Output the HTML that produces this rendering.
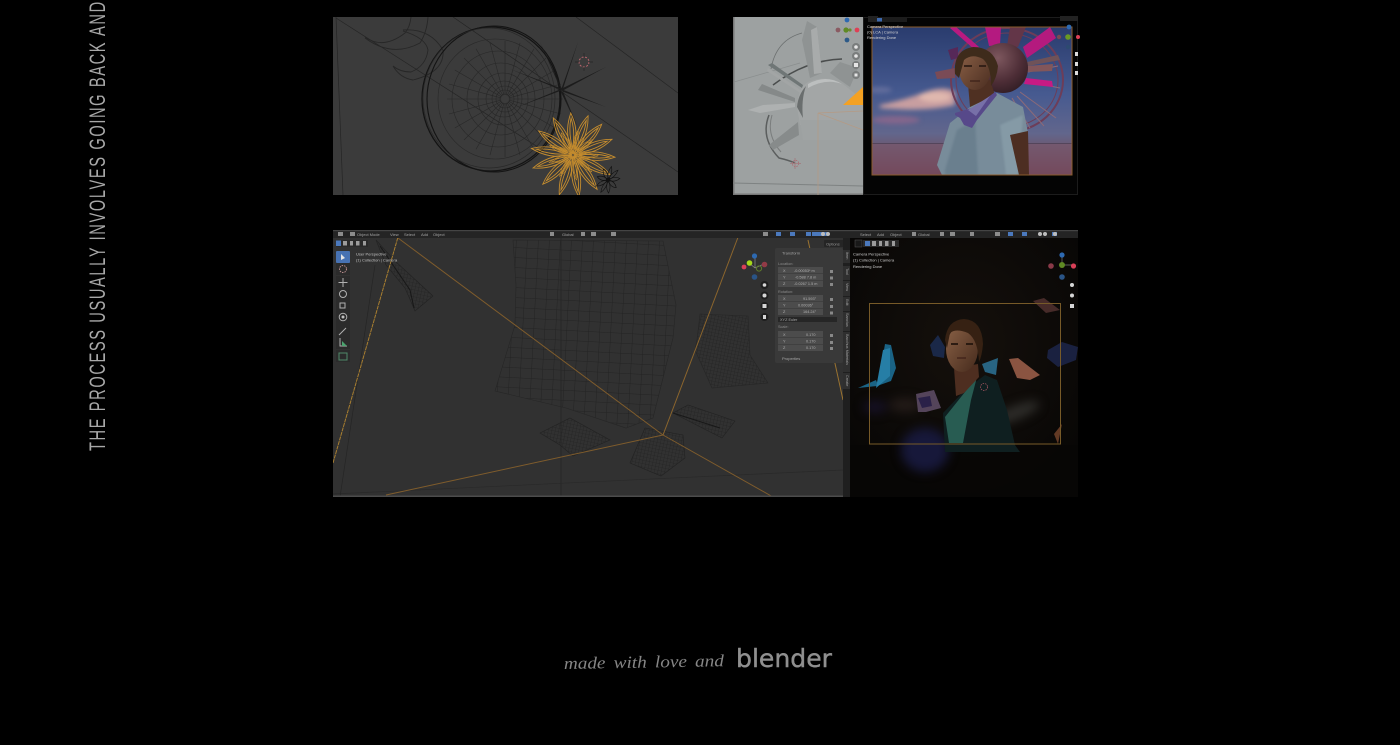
<!DOCTYPE html>
<html lang="en">
<head>
<meta charset="utf-8">
<title>Process</title>
<style>
html,body{margin:0;padding:0;background:#000;width:1400px;height:745px;overflow:hidden}
svg{display:block;position:absolute;left:0;top:0}
text{font-family:"Liberation Sans",sans-serif}
</style>
</head>
<body>
<svg width="1400" height="745" viewBox="0 0 1400 745" xmlns="http://www.w3.org/2000/svg">
<defs>
  <clipPath id="p1"><rect x="333" y="17" width="345" height="178"/></clipPath>
  <clipPath id="p2a"><rect x="733" y="17" width="130" height="178"/></clipPath>
  <clipPath id="p2b"><rect x="872" y="27" width="200" height="148"/></clipPath>
  <clipPath id="p3"><rect x="333" y="230" width="745" height="267"/></clipPath>
  <clipPath id="p3r"><rect x="850" y="238" width="228" height="259"/></clipPath>
  <pattern id="gridL" width="11" height="10" patternUnits="userSpaceOnUse" patternTransform="rotate(3)">
    <path d="M0 0H11M0 0V10" stroke="#202020" stroke-width=".8" fill="none"/>
  </pattern>
  <pattern id="gridS" width="3.4" height="3.4" patternUnits="userSpaceOnUse" patternTransform="rotate(12)">
    <path d="M0 0H3.4M0 0V3.4" stroke="#202020" stroke-width=".6" fill="none"/>
  </pattern>
  <linearGradient id="sky" x1="0" y1="0" x2="0" y2="1">
    <stop offset="0" stop-color="#2a3c6e"/>
    <stop offset=".45" stop-color="#465a90"/>
    <stop offset=".72" stop-color="#62668c"/>
    <stop offset=".8" stop-color="#6b5a74"/>
    <stop offset="1" stop-color="#6a3c50"/>
  </linearGradient>
  <radialGradient id="sph" cx=".4" cy=".3" r=".8">
    <stop offset="0" stop-color="#7d575e"/>
    <stop offset=".6" stop-color="#4d2d36"/>
    <stop offset="1" stop-color="#2c1a20"/>
  </radialGradient>
  <linearGradient id="face" x1="0" y1="0" x2="1" y2="1">
    <stop offset="0" stop-color="#8d6248"/>
    <stop offset="1" stop-color="#4a2d20"/>
  </linearGradient>
  <linearGradient id="faceW" x1="0" y1="0" x2="1" y2="1">
    <stop offset="0" stop-color="#8a6146"/>
    <stop offset="1" stop-color="#452a1c"/>
  </linearGradient>
  <radialGradient id="photoBg" cx=".5" cy=".4" r=".7">
    <stop offset="0" stop-color="#15100c"/>
    <stop offset="1" stop-color="#070605"/>
  </radialGradient>
  <filter id="soft" x="-2%" y="-2%" width="104%" height="104%" color-interpolation-filters="sRGB"><feGaussianBlur stdDeviation=".3"/></filter>
  <filter id="b1" color-interpolation-filters="sRGB"><feGaussianBlur stdDeviation="1"/></filter>
  <filter id="b2" color-interpolation-filters="sRGB"><feGaussianBlur stdDeviation="2.5"/></filter>
  <filter id="b4" x="-50%" y="-50%" width="200%" height="200%" color-interpolation-filters="sRGB"><feGaussianBlur stdDeviation="5"/></filter>
  <g id="petal"><path d="M0 -2C-6 -16 -5 -30 0 -42C5 -30 6 -16 0 -2ZM0 -6C-2.500 -18 -2.500 -28 0 -37C2.500 -28 2.500 -18 0 -6Z" fill="none" stroke="#c48c2e" stroke-width=".9"/></g>
  <g id="petalB"><path d="M0 0C-2.500 -5 -2.500 -9 0 -13C2.500 -9 2.500 -5 0 0Z" fill="none" stroke="#111" stroke-width=".7"/></g>
  <line id="spoke" x1="0" y1="-4" x2="0" y2="-58" stroke="#282828" stroke-width=".6"/>
</defs>

<rect width="1400" height="745" fill="#000"/>

<!-- Vertical headline -->
<text transform="translate(105,451) rotate(-90) scale(.65,1)" font-size="22.500" fill="#a8a8a8" textLength="691" lengthAdjust="spacing" style="font-family:'Liberation Sans Narrow','Liberation Sans',sans-serif">THE PROCESS USUALLY INVOLVES GOING BACK AND</text>

<!-- Panel 1: wireframe -->
<g filter="url(#soft)">
<g clip-path="url(#p1)">
  <rect x="333" y="17" width="345" height="178" fill="#3b3b3b"/>
  <g stroke="#252525" stroke-width=".7" fill="none">
    <path d="M576 17L678 93M453 17L678 172M336 17L343 195M336 18L566 165"/>
  </g>
  <g fill="none" stroke="#272727" stroke-width=".9">
    <path d="M365 37Q383 50 405 33Q410 27 411 17M365 38Q392 58 420 43Q427 32 428 17"/>
    <path d="M403 30Q430 28 443 50Q445 72 413 80Q400 78 393 66M403 31Q426 38 428 50Q426 66 411 72Q400 72 393 66"/>
  </g>
  <g fill="none" stroke="#282828" stroke-width=".6">
    <ellipse cx="505" cy="99" rx="5" ry="5"/>
    <ellipse cx="505" cy="99" rx="9" ry="9"/>
    <ellipse cx="505" cy="99" rx="13" ry="13"/>
    <ellipse cx="504" cy="99" rx="18" ry="18"/>
    <ellipse cx="503" cy="99" rx="25" ry="26"/>
    <ellipse cx="501" cy="99" rx="34" ry="36"/>
    <ellipse cx="498" cy="99" rx="46" ry="48"/>
    <ellipse cx="495" cy="99" rx="57" ry="60"/>
  </g>
  <g transform="translate(505,99)">
    <use href="#spoke" transform="rotate(0)"/><use href="#spoke" transform="rotate(15)"/><use href="#spoke" transform="rotate(30)"/><use href="#spoke" transform="rotate(45)"/><use href="#spoke" transform="rotate(60)"/><use href="#spoke" transform="rotate(75)"/><use href="#spoke" transform="rotate(90)"/><use href="#spoke" transform="rotate(105)"/><use href="#spoke" transform="rotate(120)"/><use href="#spoke" transform="rotate(135)"/><use href="#spoke" transform="rotate(150)"/><use href="#spoke" transform="rotate(165)"/><use href="#spoke" transform="rotate(180)"/><use href="#spoke" transform="rotate(195)"/><use href="#spoke" transform="rotate(210)"/><use href="#spoke" transform="rotate(225)"/><use href="#spoke" transform="rotate(240)"/><use href="#spoke" transform="rotate(255)"/><use href="#spoke" transform="rotate(270)"/><use href="#spoke" transform="rotate(285)"/><use href="#spoke" transform="rotate(300)"/><use href="#spoke" transform="rotate(315)"/><use href="#spoke" transform="rotate(330)"/><use href="#spoke" transform="rotate(345)"/>
  </g>
  <g fill="none" stroke="#141414">
    <ellipse cx="491" cy="99" rx="69" ry="72" stroke-width="1.300"/>
    <ellipse cx="494" cy="99" rx="67" ry="73" stroke-width="1.100"/>
    <ellipse cx="489" cy="98" rx="66" ry="70" stroke-width=".7" stroke="#282828"/>
  </g>
  <g fill="#1c1c1c">
    <path d="M561 90L578 42L562 92ZM561 89L606 67L562 91ZM561 89L606 107L561 91ZM561 90L510 69L560 88ZM561 89L515 108L560 91ZM561 90L540 42L562 89ZM560 90L578 128L562 89Z"/>
  </g>
  <g transform="translate(573,155)">
    <use href="#petal" transform="rotate(-3)"/><use href="#petal" transform="rotate(21)"/><use href="#petal" transform="rotate(43)"/><use href="#petal" transform="rotate(68)"/><use href="#petal" transform="rotate(93)"/><use href="#petal" transform="rotate(118)"/><use href="#petal" transform="rotate(145)"/><use href="#petal" transform="rotate(172)"/><use href="#petal" transform="rotate(199)"/><use href="#petal" transform="rotate(226)"/><use href="#petal" transform="rotate(252)"/><use href="#petal" transform="rotate(279)"/><use href="#petal" transform="rotate(305)"/><use href="#petal" transform="rotate(332)"/>
    <g transform="scale(.6) rotate(12)">
      <use href="#petal" transform="rotate(0)"/><use href="#petal" transform="rotate(40)"/><use href="#petal" transform="rotate(80)"/><use href="#petal" transform="rotate(120)"/><use href="#petal" transform="rotate(160)"/><use href="#petal" transform="rotate(200)"/><use href="#petal" transform="rotate(240)"/><use href="#petal" transform="rotate(280)"/><use href="#petal" transform="rotate(320)"/>
    </g>
  </g>
  <g transform="translate(608,180) rotate(30) scale(.85,1.100)">
    <use href="#petalB" transform="rotate(20)"/><use href="#petalB" transform="rotate(60)"/><use href="#petalB" transform="rotate(100)"/><use href="#petalB" transform="rotate(140)"/><use href="#petalB" transform="rotate(180)"/><use href="#petalB" transform="rotate(220)"/><use href="#petalB" transform="rotate(260)"/><use href="#petalB" transform="rotate(300)"/><use href="#petalB" transform="rotate(340)"/>
    <circle r="2.500" fill="#111"/>
  </g>
  <circle cx="584" cy="62" r="5" fill="none" stroke="#b9656d" stroke-width="1" stroke-dasharray="2 1.500"/>
  <path d="M584 53V57M584 67V71M575 62H579M589 62H593" stroke="#262626" stroke-width=".7"/>
</g>
</g>

<!-- Panel 2 -->
<g filter="url(#soft)">
<rect x="863" y="17" width="215" height="178" fill="#040404"/>
<rect x="863.500" y="17.500" width="214" height="177" fill="none" stroke="#1c1c1c"/>
<g clip-path="url(#p2a)">
  <rect x="733" y="17" width="130" height="178" fill="#9da1a1"/>
  <rect x="733" y="17" width="1.500" height="178" fill="#777"/>
  <rect x="733" y="193.500" width="130" height="1.500" fill="#777"/>
  <path d="M734 82L800 63" stroke="#8a8e8e" stroke-width=".7"/>
  <path d="M733 183L863 186" stroke="#7e8282" stroke-width="1"/>
  <path d="M771 69Q776 40 802 33" fill="none" stroke="#6c7070" stroke-width=".8"/>
  <path d="M773 85Q806 60 842 59" fill="none" stroke="#4a4d4d" stroke-width="1.500"/>
  <path d="M769 115Q760 138 779 158Q788 160 795 163" fill="none" stroke="#5b5e5e" stroke-width="1.500"/>
  <path d="M772 115Q766 135 781 152" fill="none" stroke="#7a7d7d" stroke-width="1"/>
  <path d="M807 21L817 27L822 73L810 78L802 40Z" fill="#8f9393"/>
  <path d="M811 30L817 27L822 73L814 74Z" fill="#a8abab"/>
  <path d="M768 65L772 63L803 85L802 88Z" fill="#6f7676"/>
  <path d="M768 68L802 91L800 93L767 71Z" fill="#a2a5a5"/>
  <path d="M758 90L762 84L795 98L795 102Z" fill="#858989"/>
  <path d="M748 110L763 105L795 103L795 107L760 113Z" fill="#aeb1b1"/>
  <path d="M769 145L798 122L799 135L773 150Z" fill="#878b8b"/>
  <path d="M830 73L840 62L858 68L850 87L837 78Z" fill="#8f9393"/>
  <path d="M797 107Q798 88 808 82Q826 74 843 84Q853 92 863 100V125H800Z" fill="#a3a6a6"/>
  <path d="M797 107Q798 95 806 86Q801 100 803 118Z" fill="#6a6e6e"/>
  <path d="M808 84Q826 74 842 84Q826 78 808 88Z" fill="#bcbfbf"/>
  <path d="M800 120H863V140H803Z" fill="#9fa3a3"/>
  <path d="M843 105L863 87V105Z" fill="#f4a122"/>
  <path d="M818 113L863 111M818 113L863 130M818 113V195" fill="none" stroke="#b59a84" stroke-width=".7"/>
  <path d="M795 158V169M790 163.500H801" stroke="#a2777b" stroke-width=".8"/>
  <circle cx="795.500" cy="163.500" r="3.200" fill="none" stroke="#ab6c72" stroke-width=".8" stroke-dasharray="1.500 1"/>
  <circle cx="847" cy="20" r="2.400" fill="#2d69b1"/>
  <circle cx="847" cy="40" r="2.400" fill="#2d5a88"/>
  <circle cx="838" cy="30" r="2.400" fill="#8a5b62"/>
  <circle cx="857" cy="30" r="2.400" fill="#de4055"/>
  <circle cx="846" cy="30" r="2.600" fill="#5f8a24"/>
  <circle cx="850" cy="30" r="1.600" fill="#6d8a2e"/>
  <g fill="#7a7d7d"><circle cx="856" cy="47" r="4"/><circle cx="856" cy="56" r="4"/><circle cx="856" cy="65" r="4"/><circle cx="856" cy="75" r="4"/></g>
  <g fill="#e6e6e6"><circle cx="856" cy="47" r="1.800"/><circle cx="856" cy="56" r="1.800"/><rect x="854" y="63" width="4" height="4"/><rect x="854.500" y="73.500" width="3" height="3"/></g>
</g>
<rect x="868" y="16" width="10" height="6" fill="#222"/>
<rect x="877" y="17" width="30" height="5" fill="#1c1c1c"/>
<rect x="877" y="18" width="5" height="3.500" fill="#3e69ad"/>
<rect x="1060" y="16" width="18" height="5" fill="#222"/>
<g clip-path="url(#p2b)">
  <rect x="872" y="27" width="200" height="148" fill="url(#sky)"/>
  <g filter="url(#b2)">
    <path d="M880 105Q905 100 925 92Q945 85 955 92L955 105Q925 112 880 108Z" fill="#c89ea0"/>
    <ellipse cx="935" cy="97" rx="16" ry="5" fill="#e0b8ae"/>
    <ellipse cx="896" cy="120" rx="24" ry="4" fill="#84668c"/>
    <ellipse cx="880" cy="90" rx="12" ry="3" fill="#646e9c"/>
  </g>
  <rect x="872" y="143" width="200" height="32" fill="#7d5568" opacity=".5"/>
  <path d="M872 143.500H1072" stroke="#4a3f55" stroke-width=".7"/>
  <g fill="none" stroke="#6d3d58">
    <ellipse cx="1007" cy="80" rx="56" ry="52" stroke-width="2"/>
    <ellipse cx="1007" cy="80" rx="51" ry="47" stroke-width="1"/>
    <path d="M1020 92L1056 118M1017 96L1044 126M1012 98L1030 128M1030 82L1060 88M1028 72L1058 66" stroke="#8c6a78" stroke-width="1"/>
  </g>
  <path d="M950 28L955 26L979 47L975 50Z" fill="#b81a80"/>
  <path d="M985 27H1001L1000 45L989 46Z" fill="#b41a80"/>
  <path d="M1023 47L1050 27L1056 38L1027 58Z" fill="#b41a7e"/>
  <path d="M1010 27L1026 27L1018 47L1007 46Z" fill="#633648"/>
  <path d="M1026 78L1052 81L1053 87L1024 84Z" fill="#c61a84"/>
  <path d="M1027 62L1058 55L1060 60L1028 66Z" fill="#6f5258"/>
  <path d="M1027 66L1053 64L1052 71L1027 72Z" fill="#82565a"/>
  <path d="M935 72L955 68L955 78L937 79Z" fill="#7a4b56"/>
  <path d="M948 50L958 47L958 58L951 60Z" fill="#562858"/>
  <circle cx="1003" cy="68" r="25" fill="url(#sph)"/>
  <path d="M937 165L950 123L970 107L997 93L1023 107L1028 133L1010 135L1028 175H942Z" fill="#788c9a"/>
  <path d="M945 170L957 130L975 120L978 175H945Z" fill="#6a7f8e" filter="url(#b1)"/>
  <path d="M1000 125L1023 115L1018 175H1006Z" fill="#859aa6" filter="url(#b1)"/>
  <path d="M1010 135L1028 131L1029 175H1019Z" fill="#4d2e22"/>
  <path d="M968 84L990 80L995 95L970 107Z" fill="#4f3022"/>
  <path d="M955 113L975 107L995 92L997 95L977 120L972 128L964 125L960 118L955 115Z" fill="#57498a"/>
  <path d="M968 110L990 96L976 116Z" fill="#7770a8"/>
  <ellipse cx="975" cy="69" rx="16" ry="21" fill="url(#face)"/>
  <path d="M964 66H972M979 66H986" stroke="#2e1c14" stroke-width="1.800"/>
  <path d="M970 81H980" stroke="#3a1f18" stroke-width="1.200"/>
  <path d="M955 74Q953 50 973 47Q993 47 998 66Q997 78 991 86Q991 66 983 59Q972 53 964 60L959 78Z" fill="#3e2b1b"/>
</g>
<rect x="872" y="27" width="200" height="148" fill="none" stroke="#8a5c2c" stroke-width="1"/>
<g fill="#d4d4d4">
  <text x="867" y="28" font-size="4">Camera Perspective</text>
  <text x="867" y="33.500" font-size="4">(0) LCA | Camera</text>
  <text x="867" y="39" font-size="4">Rendering Done</text>
</g>
<circle cx="1069" cy="27" r="2.400" fill="#2d69b1"/>
<circle cx="1068" cy="37" r="2.800" fill="#6a9a22"/>
<circle cx="1059" cy="37" r="2.200" fill="#7a4a52"/>
<circle cx="1078" cy="37" r="2" fill="#de4055"/>
<circle cx="1068" cy="47" r="2.200" fill="#2d4a70"/>
<g fill="#dcdcdc"><rect x="1075" y="52" width="3" height="4"/><rect x="1075" y="62" width="3" height="4"/><rect x="1075" y="71" width="3" height="4"/></g>
</g>

<!-- Panel 3 -->
<g filter="url(#soft)">
<g clip-path="url(#p3)">
  <rect x="333" y="230" width="510" height="267" fill="#313131"/>
  <path d="M333 494L843 470" stroke="#292929" stroke-width=".7"/>
  <path d="M561 238V497M375 265L340 497" stroke="#252525" stroke-width=".7"/>
  <g stroke="#262626" stroke-width=".6">
    <path d="M513 240L663 241L676 305L673 338L653 418L626 428L566 408L495 391L515 325L516 285Z" fill="url(#gridL)"/>
    <path d="M697 340L700 314L748 316L750 355L768 383L712 388L695 350Z" fill="url(#gridS)"/>
  </g>
  <g stroke="#222" stroke-width=".6">
    <path d="M376 240L395 261L433 296L415 311L405 288L386 265Z" fill="url(#gridS)"/>
    <path d="M540 433L570 418L610 440L573 456L560 445Z" fill="url(#gridS)"/>
    <path d="M630 463L645 428L683 435L685 458L661 476Z" fill="url(#gridS)"/>
    <path d="M673 413L688 405L735 421L722 438Z" fill="url(#gridS)"/>
  </g>
  <path d="M380 246L410 290L414 308" fill="none" stroke="#181818" stroke-width="1"/>
  <path d="M673 413L720 428" fill="none" stroke="#181818" stroke-width="1"/>
  <g fill="none" stroke-width="1">
    <path d="M333 463L398 237" stroke="#a97f31" stroke-dasharray="4 .7"/>
    <path d="M398 238L663 435L773 497" stroke="#7f5c2c"/>
    <path d="M386 495L663 435" stroke="#7f5c2c"/>
    <path d="M663 435L740 232" stroke="#8b652d"/>
    <path d="M808 240L843 400" stroke="#9b7330"/>
  </g>
  <rect x="333" y="495.500" width="745" height="1.500" fill="#4c4c4c"/>

  <rect x="333" y="230" width="745" height="8" fill="#242424"/>
  <rect x="333" y="230" width="745" height="1.200" fill="#444"/>
  <g fill="#a4a4a4">
    <text x="357" y="236" font-size="4">Object Mode</text>
    <text x="390" y="236" font-size="4">View</text>
    <text x="404" y="236" font-size="4">Select</text>
    <text x="421" y="236" font-size="4">Add</text>
    <text x="433" y="236" font-size="4">Object</text>
    <text x="562" y="236" font-size="4">Global</text>
    <text x="860" y="236" font-size="4">Select</text>
    <text x="877" y="236" font-size="4">Add</text>
    <text x="890" y="236" font-size="4">Object</text>
    <text x="918" y="236" font-size="4">Global</text>
  </g>
  <g fill="#8c8c8c">
    <rect x="338" y="232" width="5" height="4"/><rect x="350" y="232" width="5" height="4"/>
    <rect x="550" y="232" width="4" height="4"/><rect x="581" y="232" width="4" height="4"/><rect x="591" y="232" width="5" height="4"/><rect x="611" y="232" width="5" height="4"/>
    <rect x="912" y="232" width="4" height="4"/><rect x="940" y="232" width="4" height="4"/><rect x="950" y="232" width="5" height="4"/><rect x="970" y="232" width="4" height="4"/>
    <rect x="763" y="232" width="5" height="4"/><rect x="995" y="232" width="5" height="4"/>
  </g>
  <g fill="#4b79bd">
    <rect x="776" y="232" width="5" height="4"/><rect x="790" y="232" width="5" height="4"/><rect x="806" y="232" width="5" height="4"/><rect x="812" y="232" width="16" height="4"/>
    <rect x="1008" y="232" width="5" height="4"/><rect x="1022" y="232" width="5" height="4"/><rect x="1052" y="232" width="5" height="4"/>
  </g>
  <g fill="#bdbdbd"><circle cx="823" cy="234" r="2"/><circle cx="828" cy="234" r="2"/><circle cx="1055" cy="234" r="2"/><circle cx="1045" cy="234" r="2"/><circle cx="1040" cy="234" r="2"/></g>
  <rect x="824" y="240" width="24" height="7" rx="1" fill="#252525"/>
  <text x="826" y="245.500" font-size="4" fill="#999">Options</text>
  <rect x="1052" y="240" width="26" height="7" rx="1" fill="#252525"/>
  <text x="1057" y="245.500" font-size="4" fill="#999">Options</text>

  <rect x="336" y="240" width="32" height="7" fill="#2a2a2a"/>
  <rect x="336" y="240.500" width="5" height="5.500" fill="#4b79bd"/>
  <g fill="#9c9c9c"><rect x="343" y="241" width="4" height="4.500"/><rect x="350" y="241" width="3" height="4.500"/><rect x="356" y="241" width="3.500" height="4.500"/><rect x="363" y="241" width="3" height="4.500"/></g>
  <rect x="336" y="251" width="14" height="12" rx="1" fill="#4772b3"/>
  <path d="M341 254L341 260L345 258Z" fill="#e4e4e4"/>
  <g fill="#2b2b2b">
    <rect x="336" y="263" width="14" height="12"/>
    <rect x="336" y="276" width="14" height="49"/>
    <rect x="336" y="325" width="14" height="24"/>
    <rect x="336" y="350" width="14" height="12"/>
  </g>
  <g fill="none" stroke="#b0b0b0" stroke-width="1">
    <circle cx="343" cy="269" r="3.500" stroke-dasharray="1.500 1" stroke="#bb8e8e"/>
    <path d="M343 278V287M338.500 282.500H347.500"/>
    <circle cx="343" cy="294" r="3.500"/>
    <rect x="340" y="303" width="5" height="5"/>
    <circle cx="343" cy="317" r="3.800"/>
    <path d="M339 335L346 328"/>
    <path d="M340 338V346H347"/>
  </g>
  <circle cx="343" cy="317" r="1.500" fill="#c0c0c0"/>
  <path d="M342 341L347 346H342Z" fill="#4ca36f"/>
  <path d="M339 353H347V360H339Z" fill="none" stroke="#4f8a6a"/>
  <text x="356" y="255.500" font-size="4" fill="#c4c4c4">User Perspective</text>
  <text x="356" y="261.500" font-size="4" fill="#c4c4c4">(1) Collection | Camera</text>

  <path d="M755 268V258M755 268L749 263M755 268L764 264" stroke="#8a8a8a" stroke-width=".7"/>
  <circle cx="754.500" cy="256" r="2.600" fill="#2d69b1"/>
  <circle cx="749.500" cy="263" r="2.800" fill="#a6d81a"/>
  <circle cx="764.500" cy="264.500" r="2.800" fill="#923a46"/>
  <circle cx="744" cy="267" r="2.400" fill="#d93f57"/>
  <circle cx="759" cy="268.500" r="2.600" fill="none" stroke="#5e7a2a"/>
  <circle cx="754.500" cy="277" r="2.800" fill="#2a5486"/>
  <g fill="#1f1f1f"><circle cx="764.500" cy="285" r="4"/><circle cx="764.500" cy="295.500" r="4"/><circle cx="764.500" cy="306" r="4"/><circle cx="764.500" cy="317" r="4"/></g>
  <g fill="#d6d6d6"><circle cx="764.500" cy="285" r="1.800"/><circle cx="764.500" cy="295.500" r="2"/><rect x="762.500" y="304" width="4" height="4"/><rect x="763" y="315" width="3" height="4"/></g>

  <rect x="775" y="248" width="68" height="115" rx="2" fill="#393939"/>
  <text x="782" y="254.500" font-size="4" fill="#a8a8a8">Transform</text>
  <text x="778" y="265" font-size="3.800" fill="#8c8c8c">Location:</text>
  <rect x="778" y="267" width="45" height="20" fill="#4c4c4c"/>
  <text x="778" y="293" font-size="3.800" fill="#8c8c8c">Rotation:</text>
  <rect x="778" y="295" width="45" height="20" fill="#4c4c4c"/>
  <rect x="778" y="317" width="59" height="5" fill="#262626"/>
  <text x="780" y="321" font-size="3.800" fill="#aaa">XYZ Euler</text>
  <text x="778" y="328" font-size="3.800" fill="#8c8c8c">Scale:</text>
  <rect x="778" y="331" width="45" height="20" fill="#4c4c4c"/>
  <path d="M778 273.700H823M778 280.300H823M778 301.700H823M778 308.300H823M778 337.700H823M778 344.300H823" stroke="#393939" stroke-width=".7"/>
  <g fill="#b0b0b0" font-size="3.800">
    <text x="783" y="272">X</text><text x="794" y="272">-0.00053* m</text>
    <text x="783" y="278.500">Y</text><text x="795" y="278.500">-0.588 7.8 m</text>
    <text x="783" y="285">Z</text><text x="794" y="285">-0.0267 1.5 m</text>
    <text x="783" y="300">X</text><text x="803" y="300">91.593°</text>
    <text x="783" y="306.500">Y</text><text x="798" y="306.500">0.00036°</text>
    <text x="783" y="313">Z</text><text x="803" y="313">164.24°</text>
    <text x="783" y="336">X</text><text x="806" y="336">0.170</text>
    <text x="783" y="342.500">Y</text><text x="806" y="342.500">0.170</text>
    <text x="783" y="349">Z</text><text x="806" y="349">0.170</text>
  </g>
  <g fill="#888"><rect x="830" y="270" width="3" height="3"/><rect x="830" y="276.500" width="3" height="3"/><rect x="830" y="283" width="3" height="3"/><rect x="830" y="298" width="3" height="3"/><rect x="830" y="305" width="3" height="3"/><rect x="830" y="311.500" width="3" height="3"/><rect x="830" y="334" width="3" height="3"/><rect x="830" y="341" width="3" height="3"/><rect x="830" y="347" width="3" height="3"/></g>
  <text x="782" y="360" font-size="4" fill="#a8a8a8">Properties</text>

  <rect x="843" y="238" width="7" height="259" fill="#1f1f1f"/>
  <g fill="#2f2f2f">
    <rect x="843" y="250" width="7" height="13"/><rect x="843" y="266" width="7" height="14"/><rect x="843" y="281" width="7" height="15"/><rect x="843" y="297" width="7" height="14"/><rect x="843" y="312" width="7" height="19"/><rect x="843" y="332" width="7" height="40"/><rect x="843" y="373" width="7" height="16"/>
  </g>
  <g fill="#a0a0a0" font-size="3.800">
    <text transform="translate(846,252) rotate(90)">Item</text>
    <text transform="translate(846,268) rotate(90)">Tool</text>
    <text transform="translate(846,283) rotate(90)">View</text>
    <text transform="translate(846,299) rotate(90)">Edit</text>
    <text transform="translate(846,313) rotate(90)">Sanctus</text>
    <text transform="translate(846,334) rotate(90)">Bacchus Materials</text>
    <text transform="translate(846,375) rotate(90)">Create</text>
  </g>

  <g clip-path="url(#p3r)">
    <rect x="850" y="238" width="228" height="259" fill="url(#photoBg)"/>
    <rect x="850" y="445" width="228" height="52" fill="#070605" opacity=".8"/>
    <g filter="url(#b4)">
      <ellipse cx="925" cy="450" rx="24" ry="22" fill="#17183a"/>
      <ellipse cx="1015" cy="413" rx="26" ry="7" fill="#2e2d2a" transform="rotate(-22 1015 413)"/>
      <ellipse cx="905" cy="405" rx="16" ry="7" fill="#231b18"/>
      <ellipse cx="875" cy="407" rx="12" ry="6" fill="#161126"/>
    </g>
    <g filter="url(#soft)">
      <path d="M878 385L885 344L891 345L896 368L891 381L877 386L858 388L876 380Z" fill="#1a6385"/>
      <path d="M876 388L883 350L890 348L890 376Z" fill="#267ea6"/>
      <path d="M930 345L938 335L945 347L944 358L933 356Z" fill="#1a2848"/>
      <path d="M982 364L998 358L996 375L985 372Z" fill="#286482"/>
      <path d="M1009 359L1018 358L1040 375L1030 380L1017 378Z" fill="#8a5441"/>
      <path d="M1048 350L1062 342L1078 347L1076 360L1058 367L1047 358Z" fill="#1a2140"/>
      <path d="M1033 301L1044 298L1060 310L1046 313Z" fill="#472b29"/>
      <path d="M1054 434L1062 424L1058 444Z" fill="#623924"/>
      <path d="M916 394L934 390L941 408L926 412L918 412Z" fill="#54445a"/>
      <path d="M918 398L930 396L932 406L922 408Z" fill="#2a2148"/>
    </g>
    <path d="M943 413L965 390L985 375L997 380L1007 410L1015 445L1020 452H945Z" fill="#0f1f20"/>
    <path d="M945 417L977 377L971 400L963 443H949Z" fill="#285c52"/>
    <path d="M954 368L978 364L979 377L964 393L956 396Z" fill="#4e2e20"/>
    <ellipse cx="962" cy="349" rx="16" ry="23" fill="url(#faceW)"/>
    <path d="M951 344H958M966 344H973" stroke="#22140d" stroke-width="1.800"/>
    <path d="M957 358H966" stroke="#3a1c15" stroke-width="1.100"/>
    <path d="M945 340Q947 320 964 319Q982 320 983 344Q982 356 979 362Q978 340 968 333Q956 328 950 333L947 348Z" fill="#362113"/>
    <circle cx="984" cy="387" r="3.500" fill="none" stroke="#a2555f" stroke-width=".8" stroke-dasharray="1.500 1"/>
  </g>
  <rect x="869.500" y="303.500" width="191" height="140.500" fill="none" stroke="#775a28" stroke-width="1"/>
  <g fill="#d0d0d0" font-size="4">
    <text x="853" y="255.500">Camera Perspective</text>
    <text x="853" y="261.500">(1) Collection | Camera</text>
    <text x="853" y="268">Rendering Done</text>
  </g>
  <path d="M1062 265V254M1062 265H1072" stroke="#777" stroke-width=".7"/>
  <circle cx="1062" cy="255" r="2.600" fill="#2d69b1"/>
  <circle cx="1062" cy="265" r="3" fill="#5f8a24"/>
  <circle cx="1051" cy="266" r="2.800" fill="#8a3a48"/>
  <circle cx="1073.500" cy="266" r="2.600" fill="#d93f57"/>
  <circle cx="1062" cy="277" r="2.800" fill="#2a5486"/>
  <g fill="#d6d6d6"><circle cx="1072" cy="285" r="2"/><circle cx="1072" cy="295.500" r="2"/><rect x="1070" y="304" width="4" height="4"/></g>
  <rect x="855" y="240" width="7" height="7" fill="#191919" stroke="#555" stroke-width=".5"/>
  <rect x="863" y="240" width="36" height="7" fill="#2a2a2a"/>
  <rect x="865" y="241" width="5" height="5" fill="#4b79bd"/>
  <g fill="#9c9c9c"><rect x="872" y="241" width="4" height="5"/><rect x="879" y="241" width="3" height="5"/><rect x="885" y="241" width="3.500" height="5"/><rect x="892" y="241" width="3" height="5"/></g>
</g>
</g>

<!-- Sign-off -->
<g filter="url(#soft)">
<text transform="translate(564,669) rotate(-1)" font-size="17" fill="#868686" font-style="italic" textLength="160" lengthAdjust="spacingAndGlyphs" style="font-family:'Liberation Serif',serif;word-spacing:3px">made with love and</text>
<text x="736" y="667" font-size="25" fill="#8f8f8f" stroke="#8f8f8f" stroke-width=".4" textLength="96" lengthAdjust="spacingAndGlyphs" style="font-family:'DejaVu Sans',sans-serif">blender</text>
</g>
</svg>
</body>
</html>
